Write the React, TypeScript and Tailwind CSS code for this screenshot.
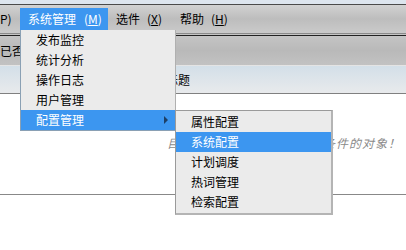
export default function App() {
  const mainItems = ["发布监控", "统计分析", "操作日志", "用户管理"];
  const subItems = ["属性配置", "系统配置", "计划调度", "热词管理", "检索配置"];

  return (
    <div className="relative w-[406px] h-[250px] overflow-hidden bg-white text-[12px] text-black font-['Noto_Sans_CJK_SC','Noto_Sans',sans-serif]">
      {/* top strip */}
      <div className="h-[4px] bg-[#dde5ee]" />
      <div className="h-px bg-[#4a4a4a]" />

      {/* menu bar */}
      <div className="h-[28px] flex items-center bg-gradient-to-b from-[#d2d2d2] via-[#bdbdbd] to-[#cacaca]">
        <span className="w-[20px] leading-none">P)</span>
        <div className="w-[88px] h-[23px] flex items-center pl-[8px] gap-[8px] bg-[#3c96f0] text-white">
          <span>系统管理</span>
          <span>
            (<span className="underline">M</span>)
          </span>
        </div>
        <div className="flex items-center gap-[7px] pl-[8px]">
          <span>选件</span>
          <span>
            (<span className="underline">X</span>)
          </span>
        </div>
        <div className="flex items-center gap-[7px] pl-[18px]">
          <span>帮助</span>
          <span>
            (<span className="underline">H</span>)
          </span>
        </div>
      </div>
      <div className="h-px bg-[#8a8a8a]" />
      <div className="h-px bg-[#c4c4c4]" />
      <div className="h-px bg-[#222]" />

      {/* toolbar */}
      <div className="h-[29px] flex items-center bg-gradient-to-b from-[#c4c4c4] via-[#b9b9b9] to-[#c2c2c2]">
        <span>已否</span>
      </div>
      <div className="h-px bg-[#e4e4e4]" />

      {/* header */}
      <div className="h-[27px] flex items-center pl-[166px] bg-gradient-to-b from-[#d3dfe8] to-[#e8eaec]">
        <span>标题</span>
      </div>
      <div className="h-px bg-[#808080]" />

      {/* body */}
      <div className="h-[41px]" />
      <div className="h-[16px] flex items-center justify-end pr-[5px]">
        <span className="italic tracking-[1px] text-[#8a8a8a]">目前没有找到任何符合查询条件的对象！</span>
      </div>
      <div className="h-[43px]" />
      <div className="h-px bg-[#888]" />

      {/* main dropdown */}
      <div className="absolute left-[20px] top-[30px] w-[156px] bg-[#ebebeb] border-l border-b border-r border-l-[#8aa0b4] border-b-[#8aa0b4] border-r-[#b0b0b0]">
        {mainItems.map((m) => (
          <div key={m} className="h-[20px] flex items-center pl-[15px]">
            {m}
          </div>
        ))}
        <div className="h-[20px] flex items-center justify-between pl-[15px] pr-[7px] bg-[#3c96f0] text-white">
          <span>配置管理</span>
          <span className="w-0 h-0 border-y-[4px] border-y-transparent border-l-[4px] border-l-[#1d3f66]" />
        </div>
      </div>

      {/* submenu */}
      <div className="absolute left-[175px] top-[110px] w-[158px] bg-[#ebebeb] border border-[#9a9a9a] border-r-2 border-b-2 border-r-[#b4b4b4] border-b-[#b4b4b4] py-px">
        {subItems.map((s, i) => (
          <div
            key={s}
            className={`h-[20px] flex items-center pl-[15px] ${i === 1 ? "bg-[#3c96f0] text-white" : ""}`}
          >
            {s}
          </div>
        ))}
      </div>
    </div>
  );
}
